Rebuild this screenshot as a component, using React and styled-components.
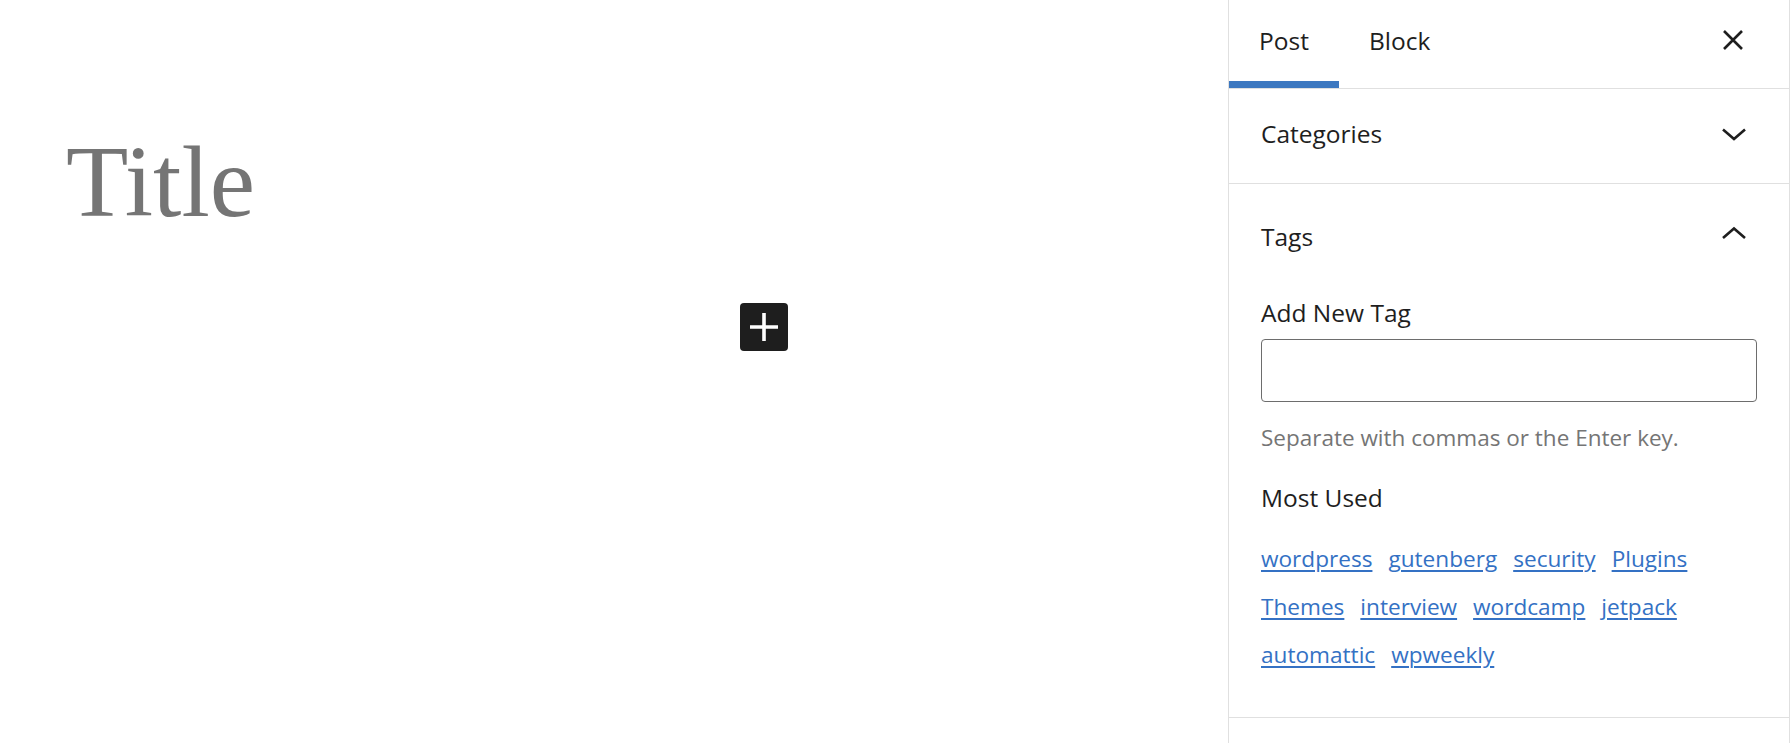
import React from 'react';
import styled, { createGlobalStyle } from 'styled-components';

const GlobalStyle = createGlobalStyle`
  html, body {
    margin: 0;
    padding: 0;
    background: #fff;
  }
  body {
    font-family: "Open Sans", "Noto Sans", sans-serif;
    color: #1e1e1e;
  }
`;

const Layout = styled.div`
  display: grid;
  grid-template-columns: 1fr 564px;
  height: 743px;
  overflow: hidden;
`;

// editor canvas
const Canvas = styled.main`
  padding: 124px 0 0 66px;
`;

const Content = styled.div`
  width: 722px;
`;

const Title = styled.h1`
  margin: 0;
  font-family: "Liberation Serif", "Times New Roman", serif;
  font-weight: 400;
  font-size: 102px;
  line-height: 116px;
  color: #757575;
`;

const AppenderRow = styled.div`
  display: flex;
  justify-content: flex-end;
  margin-top: 63px;
`;

const AddBlock = styled.button`
  width: 48px;
  height: 48px;
  border: none;
  border-radius: 4px;
  background: #1e1e1e;
  color: #fff;
  display: flex;
  align-items: center;
  justify-content: center;
  padding: 0;
`;

// sidebar
const Sidebar = styled.aside`
  border-left: 1px solid #e0e0e0;
  border-right: 1px solid #e0e0e0;
  margin-right: 2px;
  display: flex;
  flex-direction: column;
`;

const Header = styled.div`
  display: flex;
  align-items: flex-start;
  height: 88px;
  border-bottom: 1px solid #e0e0e0;
`;

const Tab = styled.button`
  height: 88px;
  padding: 0 30px 8px;
  border: none;
  background: none;
  font-family: inherit;
  font-size: 24.5px;
  color: #1e1e1e;
  box-shadow: ${p => (p.$active ? 'inset 0 -7px 0 #3d78c0' : 'none')};
`;

const CloseButton = styled.button`
  margin-left: auto;
  height: 80px;
  width: 90px;
  padding: 0 22px 0 0;
  border: none;
  background: none;
  display: flex;
  align-items: center;
  justify-content: center;
  color: #1e1e1e;
`;

const Panel = styled.section`
  border-bottom: 1px solid #e0e0e0;
`;

const PanelToggle = styled.div`
  display: flex;
  align-items: center;
  justify-content: space-between;
  box-sizing: border-box;
  height: ${p => p.$height}px;
  padding: ${p => p.$top || 0}px 42px ${p => p.$bottom || 0}px 32px;
  font-size: 24.5px;
  font-weight: 500;
`;

const PanelBody = styled.div`
  padding: 11px 32px 38px 32px;
  display: flex;
  flex-direction: column;
`;

const Label = styled.label`
  font-size: 24.5px;
  line-height: 35px;
`;

const TagInput = styled.input`
  margin-top: 9px;
  height: 63px;
  box-sizing: border-box;
  border: 1px solid #6d6d6d;
  border-radius: 4px;
`;

const Help = styled.p`
  margin: 20px 0 0;
  font-size: 22.5px;
  line-height: 32px;
  color: #757575;
`;

const SubHeading = styled.h3`
  margin: 26px 0 0;
  font-size: 24.5px;
  line-height: 35px;
  font-weight: 400;
`;

const TagCloud = styled.div`
  margin-top: 20px;
  display: flex;
  flex-wrap: wrap;
  column-gap: 16px;
`;

const TagLink = styled.a`
  font-size: 22.6px;
  line-height: 48px;
  color: #3471c4;
  text-decoration: underline;
  text-decoration-thickness: 2px;
  text-underline-offset: 3px;
`;

const Close = () => (
  <svg width="24" height="24" viewBox="0 0 24 24" fill="none" stroke="currentColor" strokeWidth="2.6">
    <path d="M3 3L21 21M21 3L3 21" />
  </svg>
);

const Chevron = ({ up }) => (
  <svg width="26" height="24" viewBox="0 0 26 24" fill="none" stroke="currentColor" strokeWidth="2.6">
    <path d={up ? 'M2 14L13 4.5L24 14' : 'M2 7.5L13 17L24 7.5'} />
  </svg>
);

const Plus = () => (
  <svg width="28" height="28" viewBox="0 0 28 28" fill="none" stroke="#fff" strokeWidth="3.6">
    <path d="M14 0V28M0 14H28" />
  </svg>
);

const tags = ['wordpress', 'gutenberg', 'security', 'Plugins', 'Themes', 'interview', 'wordcamp', 'jetpack', 'automattic', 'wpweekly'];

export default function App() {
  return (
    <>
      <GlobalStyle />
      <Layout>
        <Canvas>
          <Content>
            <Title>Title</Title>
            <AppenderRow>
              <AddBlock aria-label="Add block"><Plus /></AddBlock>
            </AppenderRow>
          </Content>
        </Canvas>
        <Sidebar>
          <Header>
            <Tab $active>Post</Tab>
            <Tab>Block</Tab>
            <CloseButton aria-label="Close settings"><Close /></CloseButton>
          </Header>
          <Panel>
            <PanelToggle $height={94} $bottom={5}>
              Categories
              <Chevron />
            </PanelToggle>
          </Panel>
          <Panel>
            <PanelToggle $height={100} $top={4}>
              Tags
              <Chevron up />
            </PanelToggle>
            <PanelBody>
              <Label>Add New Tag</Label>
              <TagInput type="text" />
              <Help>Separate with commas or the Enter key.</Help>
              <SubHeading>Most Used</SubHeading>
              <TagCloud>
                {tags.map(t => (
                  <TagLink key={t} href="#">{t}</TagLink>
                ))}
              </TagCloud>
            </PanelBody>
          </Panel>
        </Sidebar>
      </Layout>
    </>
  );
}
